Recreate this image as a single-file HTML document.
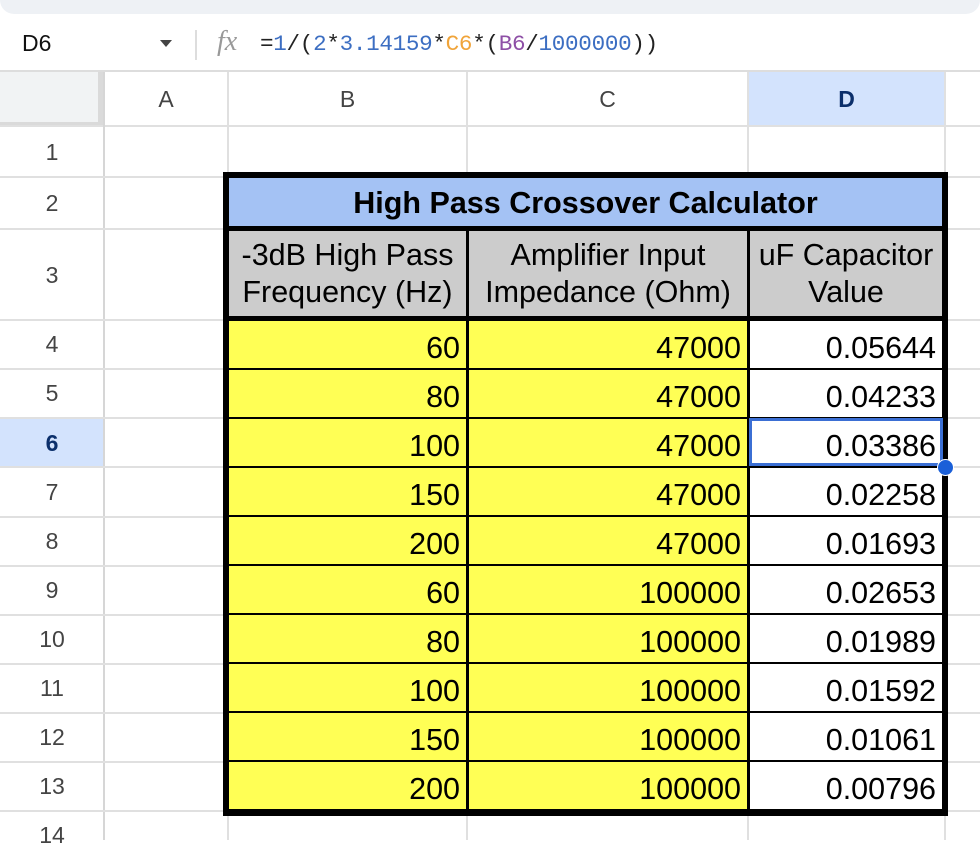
<!DOCTYPE html>
<html><head><meta charset="utf-8"><style>
body{margin:0;width:980px;height:840px;overflow:hidden;background:#fff;font-family:"Liberation Sans",Arial,sans-serif;position:relative}
.a{position:absolute}
.vl{position:absolute;width:2px;background:#e0e0e0}
.hl{position:absolute;height:2px;background:#e0e0e0}
.ch{position:absolute;top:72px;height:54px;line-height:54px;text-align:center;font-size:23px;color:#444}
.rh{position:absolute;left:0;width:104px;text-align:center;font-size:23px;color:#444}
.c{position:absolute;font-size:30.5px;color:#000;text-align:right;box-sizing:border-box;padding-right:6px}
.y{background:#ffff55}
.w{background:#fff}
</style></head><body>
<div class="a" style="left:0;top:0;width:980px;height:14px;background:#eef1f5;border-radius:0 0 14px 14px"></div>
<div class="a" style="left:22px;top:30px;font-size:23px;color:#111">D6</div>
<div class="a" style="left:160px;top:40px;width:0;height:0;border-left:6px solid transparent;border-right:6px solid transparent;border-top:7px solid #444"></div>
<div class="a" style="left:195px;top:30px;width:2px;height:30px;background:#ddd"></div>
<div class="a" style="left:217px;top:26px;font-size:28px;font-style:italic;color:#999;font-family:'Liberation Serif',serif">fx</div>
<div class="a" style="left:260px;top:31px;font-size:22.6px;font-family:'Liberation Mono',monospace;color:#222;letter-spacing:-0.3px">=<span style="color:#3c6ec2">1</span>/(<span style="color:#3c6ec2">2</span>*<span style="color:#3c6ec2">3.14159</span>*<span style="color:#f0a43a">C6</span>*(<span style="color:#8e4fa6">B6</span>/<span style="color:#3c6ec2">1000000</span>))</div>
<div class="hl" style="left:0;top:70px;width:980px;background:#ddd"></div>
<div class="a" style="left:0;top:72px;width:98px;height:50px;background:#f1f3f4"></div>
<div class="a" style="left:98px;top:72px;width:6px;height:54px;background:#dadada"></div>
<div class="a" style="left:0;top:122px;width:104px;height:4px;background:#dadada"></div>
<div class="a" style="left:748px;top:72px;width:197px;height:54px;background:#d3e3fd"></div>
<div class="ch" style="left:104px;width:124px">A</div>
<div class="ch" style="left:228px;width:239px">B</div>
<div class="ch" style="left:467px;width:281px">C</div>
<div class="ch" style="left:748px;width:197px;font-weight:bold;color:#0b2f6b">D</div>
<div class="hl" style="left:0;top:125px;width:980px"></div>
<div class="vl" style="left:227px;top:72px;height:768px"></div>
<div class="vl" style="left:466px;top:72px;height:768px"></div>
<div class="vl" style="left:747px;top:72px;height:768px"></div>
<div class="vl" style="left:944px;top:72px;height:768px"></div>
<div class="vl" style="left:103px;top:72px;height:768px;background:#d6d6d6"></div>
<div class="a" style="left:0;top:418px;width:103px;height:49px;background:#d3e3fd"></div>
<div class="rh" style="top:139px">1</div>
<div class="rh" style="top:190px">2</div>
<div class="rh" style="top:262px">3</div>
<div class="rh" style="top:331px">4</div>
<div class="rh" style="top:380px">5</div>
<div class="rh" style="top:430px;font-weight:bold;color:#0b2f6b">6</div>
<div class="rh" style="top:479px">7</div>
<div class="rh" style="top:528px">8</div>
<div class="rh" style="top:577px">9</div>
<div class="rh" style="top:626px">10</div>
<div class="rh" style="top:675px">11</div>
<div class="rh" style="top:724px">12</div>
<div class="rh" style="top:773px">13</div>
<div class="rh" style="top:822px">14</div>
<div class="hl" style="left:0;top:176px;width:980px"></div>
<div class="hl" style="left:0;top:228px;width:980px"></div>
<div class="hl" style="left:0;top:319px;width:980px"></div>
<div class="hl" style="left:0;top:368px;width:980px"></div>
<div class="hl" style="left:0;top:417px;width:980px"></div>
<div class="hl" style="left:0;top:466px;width:980px"></div>
<div class="hl" style="left:0;top:516px;width:980px"></div>
<div class="hl" style="left:0;top:565px;width:980px"></div>
<div class="hl" style="left:0;top:614px;width:980px"></div>
<div class="hl" style="left:0;top:663px;width:980px"></div>
<div class="hl" style="left:0;top:712px;width:980px"></div>
<div class="hl" style="left:0;top:761px;width:980px"></div>
<div class="hl" style="left:0;top:810px;width:980px"></div>
<div class="a" style="left:223px;top:172px;width:725px;height:644px;background:#000">
 <div class="a" style="left:6px;top:6px;width:713px;height:48px;background:#a4c2f4;text-align:center;line-height:50px;font-size:30.5px;font-weight:bold">High Pass Crossover Calculator</div>
 <div class="a" style="left:6px;top:59px;width:237px;height:85px;background:#cccccc;text-align:center;font-size:30.5px;line-height:37px;padding-top:6px;box-sizing:border-box;white-space:nowrap">-3dB High Pass<br>Frequency (Hz)</div>
 <div class="a" style="left:246px;top:59px;width:278px;height:85px;background:#cccccc;text-align:center;font-size:30.5px;line-height:37px;padding-top:6px;box-sizing:border-box;white-space:nowrap">Amplifier Input<br>Impedance (Ohm)</div>
 <div class="a" style="left:527px;top:59px;width:192px;height:85px;background:#cccccc;text-align:center;font-size:30.5px;line-height:37px;padding-top:6px;box-sizing:border-box;white-space:nowrap">uF Capacitor<br>Value</div>
</div>
<div id="rows"></div>
<script>
var d=[["60","47000","0.05644"],["80","47000","0.04233"],["100","47000","0.03386"],["150","47000","0.02258"],["200","47000","0.01693"],["60","100000","0.02653"],["80","100000","0.01989"],["100","100000","0.01592"],["150","100000","0.01061"],["200","100000","0.00796"]];
var h="";
for(var i=0;i<10;i++){var t=321+i*49;
h+='<div class="c y" style="left:229px;top:'+t+'px;width:237px;height:47px;line-height:54px">'+d[i][0]+'</div>';
h+='<div class="c y" style="left:469px;top:'+t+'px;width:278px;height:47px;line-height:54px">'+d[i][1]+'</div>';
h+='<div class="c w" style="left:750px;top:'+t+'px;width:192px;height:47px;line-height:54px">'+d[i][2]+'</div>';}
document.getElementById("rows").innerHTML=h;
</script>
<div class="a" style="left:749px;top:418px;width:194px;height:48px;border:3px solid #3b6fd4;box-sizing:border-box"></div>
<div class="a" style="left:937px;top:459px;width:15px;height:15px;border-radius:50%;background:#1a5fd8;border:1px solid #fff"></div>
</body></html>
